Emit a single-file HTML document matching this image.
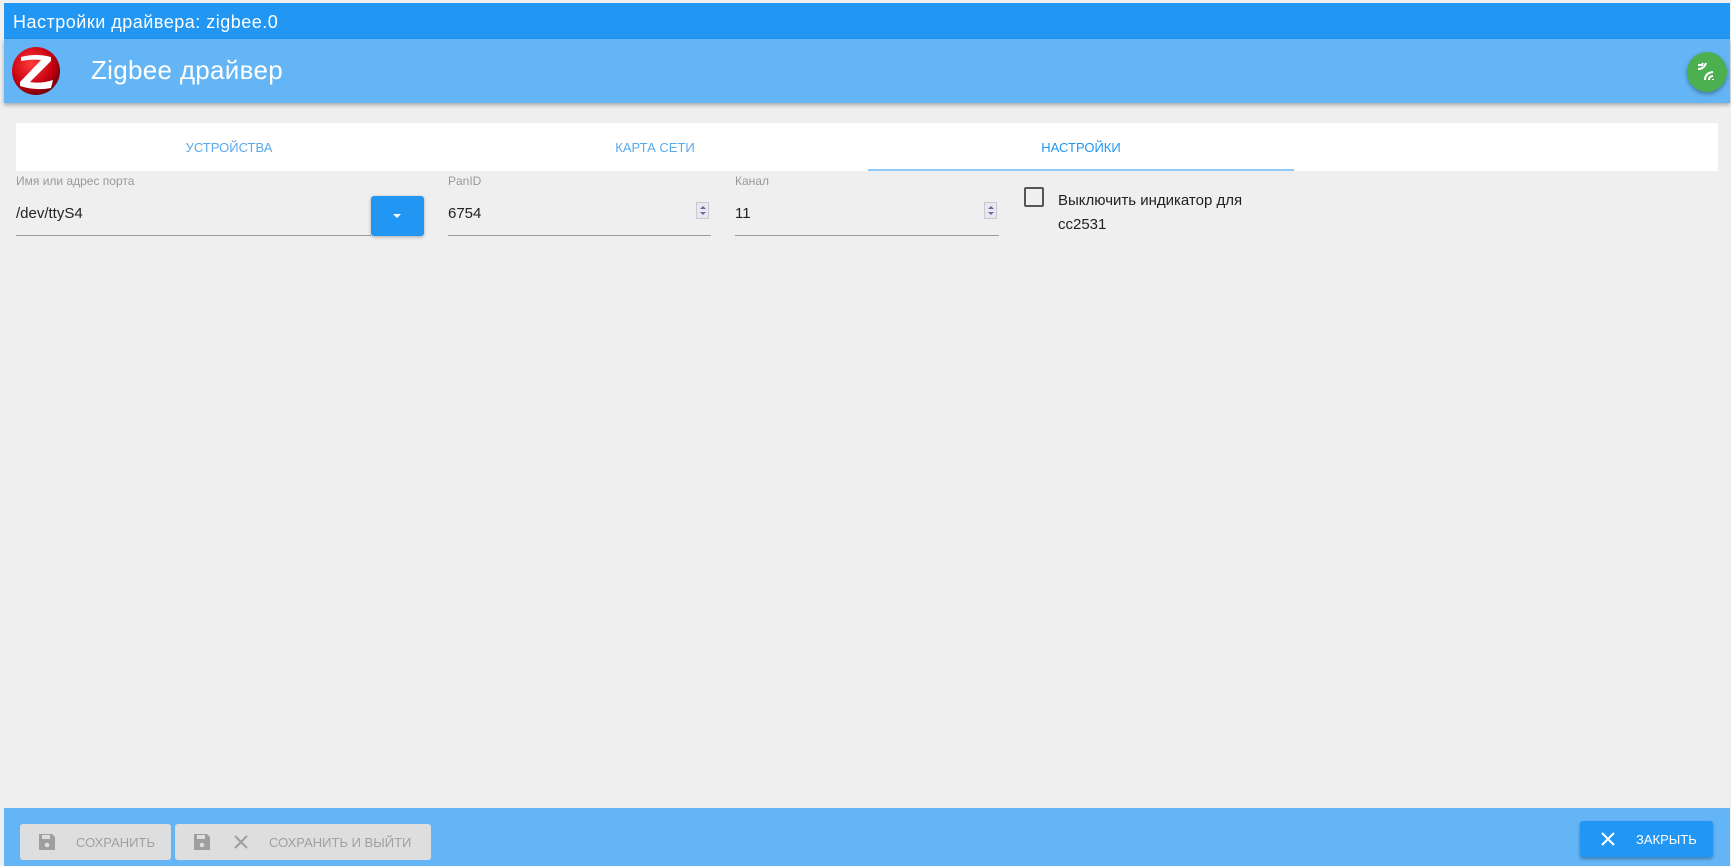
<!DOCTYPE html>
<html><head><meta charset="utf-8"><style>
*{box-sizing:border-box;margin:0;padding:0}
body{width:1731px;height:866px;background:#efefef;font-family:"Liberation Sans",sans-serif;position:relative;overflow:hidden}
.a{position:absolute}
.lbl{font-size:12px;color:#999}
.val{font-size:15px;color:#222}
.ul{height:1px;background:#999}
.spin{width:13px;height:17px;background:#e8e8f0;border:1px solid #c8c8d4}
.spin:before{content:"";position:absolute;left:3px;top:3px;border-left:3px solid transparent;border-right:3px solid transparent;border-bottom:3px solid #6a6aa0}
.spin:after{content:"";position:absolute;left:3px;top:9px;border-left:3px solid transparent;border-right:3px solid transparent;border-top:3px solid #6a6aa0}
.btn{position:absolute;background:#dedede;border-radius:3px;color:#a0a0a0;font-size:13px}
</style></head><body>
<div class="a" style="left:4px;top:3px;width:1726px;height:36px;background:#2196f3"></div>
<div class="a" style="left:13px;top:12px;color:#fff;font-size:18px;letter-spacing:0.5px">Настройки драйвера: zigbee.0</div>
<div class="a" style="left:4px;top:39px;width:1726px;height:64px;background:#64b5f6;box-shadow:0 2px 4px rgba(0,0,0,.3)"></div>
<svg class="a" style="left:11px;top:46px" width="50" height="50" viewBox="0 0 50 50">
<defs><radialGradient id="g" cx="40%" cy="35%" r="65%"><stop offset="0" stop-color="#ff3a3a"/><stop offset="0.7" stop-color="#c40010"/><stop offset="1" stop-color="#7a0008"/></radialGradient></defs>
<circle cx="25" cy="25" r="24" fill="url(#g)"/>
<path d="M10 11 Q25 7 40 11 L40 15 L19 36 Q30 38 42 34 L40 42 Q25 45 9 40 L9 36 L30 14 Q20 13 10 15Z" fill="#fff"/>
</svg>
<div class="a" style="left:91px;top:55px;color:#fff;font-size:26px;letter-spacing:0.3px">Zigbee драйвер</div>
<div class="a" style="left:1687px;top:52px;width:40px;height:40px;border-radius:50%;background:#4caf50;box-shadow:0 2px 4px rgba(0,0,0,.35)"></div>
<svg class="a" style="left:1697px;top:62px" width="20" height="20" viewBox="0 0 20 20" stroke="#fff" stroke-width="2" fill="none">
<path d="M1 3 L5 3 L6 1"/><path d="M1 7 Q7 7 9 1"/><path d="M8 18 Q8 11 16 10"/><path d="M12 18 Q12 14 16 14"/><path d="M16 17v1"/>
</svg>
<div class="a" style="left:16px;top:123px;width:1702px;height:48px;background:#fff"></div>
<div class="a" style="left:16px;top:140px;width:426px;text-align:center;font-size:13px;color:#5aa9ee">УСТРОЙСТВА</div>
<div class="a" style="left:442px;top:140px;width:426px;text-align:center;font-size:13px;color:#5aa9ee">КАРТА СЕТИ</div>
<div class="a" style="left:868px;top:140px;width:426px;text-align:center;font-size:13px;color:#2196f3">НАСТРОЙКИ</div>
<div class="a" style="left:868px;top:169px;width:426px;height:2px;background:#90caf9"></div>

<div class="a lbl" style="left:16px;top:174px">Имя или адрес порта</div>
<div class="a val" style="left:16px;top:205px">/dev/ttyS4</div>
<div class="a ul" style="left:16px;top:235px;width:355px"></div>
<div class="a" style="left:371px;top:196px;width:53px;height:40px;background:#2196f3;border-radius:3px;box-shadow:0 1px 3px rgba(0,0,0,.3)"></div>
<div class="a" style="left:393px;top:214px;width:0;height:0;border-left:4px solid transparent;border-right:4px solid transparent;border-top:4px solid #fff"></div>

<div class="a lbl" style="left:448px;top:174px">PanID</div>
<div class="a val" style="left:448px;top:205px">6754</div>
<div class="a spin" style="left:696px;top:202px"></div>
<div class="a ul" style="left:448px;top:235px;width:263px"></div>

<div class="a lbl" style="left:735px;top:174px">Канал</div>
<div class="a val" style="left:735px;top:205px">11</div>
<div class="a spin" style="left:984px;top:202px"></div>
<div class="a ul" style="left:735px;top:235px;width:264px"></div>

<div class="a" style="left:1024px;top:187px;width:20px;height:20px;border:2px solid #555;border-radius:2px"></div>
<div class="a val" style="left:1058px;top:189px;line-height:24px">Выключить индикатор для<br>cc2531</div>

<div class="a" style="left:4px;top:808px;width:1726px;height:58px;background:#64b5f6"></div>
<div class="btn" style="left:20px;top:824px;width:151px;height:36px">
<svg class="a" style="left:18px;top:9px" width="18" height="18" viewBox="0 0 18 18"><path d="M1 1H14L17 4V17H1Z" fill="#9e9e9e"/><rect x="4" y="2" width="8" height="4" fill="#dedede"/><circle cx="9" cy="12" r="2.3" fill="#dedede"/></svg>
<span class="a" style="left:56px;top:11px">СОХРАНИТЬ</span></div>
<div class="btn" style="left:175px;top:824px;width:256px;height:36px">
<svg class="a" style="left:18px;top:9px" width="18" height="18" viewBox="0 0 18 18"><path d="M1 1H14L17 4V17H1Z" fill="#9e9e9e"/><rect x="4" y="2" width="8" height="4" fill="#dedede"/><circle cx="9" cy="12" r="2.3" fill="#dedede"/></svg>
<svg class="a" style="left:59px;top:11px" width="14" height="14" viewBox="0 0 14 14" stroke="#9e9e9e" stroke-width="2"><path d="M1 1L13 13M13 1L1 13"/></svg>
<span class="a" style="left:94px;top:11px">СОХРАНИТЬ И ВЫЙТИ</span></div>
<div class="a" style="left:1580px;top:821px;width:133px;height:36px;background:#2196f3;border-radius:3px;box-shadow:0 2px 3px rgba(0,0,0,.3);color:#fff;font-size:13px">
<svg class="a" style="left:21px;top:11px" width="14" height="14" viewBox="0 0 14 14" stroke="#fff" stroke-width="2"><path d="M1 1L13 13M13 1L1 13"/></svg>
<span class="a" style="left:56px;top:11px">ЗАКРЫТЬ</span></div>
</body></html>
